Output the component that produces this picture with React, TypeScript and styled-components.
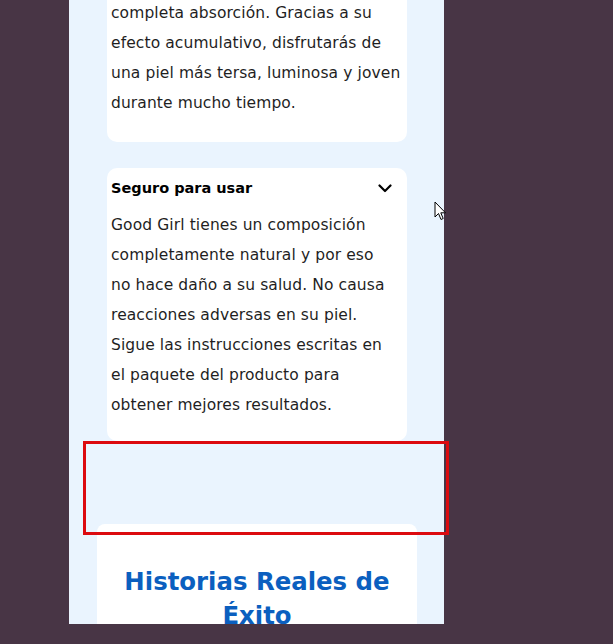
import React from "react";
import styled, { createGlobalStyle } from "styled-components";

const Global = createGlobalStyle`
  html, body { margin: 0; padding: 0; background: #483545; }
  body { font-family: "DejaVu Sans", "Noto Sans", sans-serif; }
  #root { min-height: 644px; }
`;

const Stage = styled.div`
  position: relative;
  width: 613px;
  height: 644px;
  background: #483545;
  overflow: hidden;
`;

const Panel = styled.main`
  margin-left: 69px;
  width: 375px;
  height: 624px;
  background: #eaf4fe;
  overflow: hidden;
  display: flex;
  flex-direction: column;
`;

const Card = styled.section<{ $first?: boolean }>`
  margin: ${(p) => (p.$first ? "0" : "26px")} 37px 0 38px;
  background: #ffffff;
  border-radius: ${(p) => (p.$first ? "0 0 10px 10px" : "10px")};
  padding: ${(p) => (p.$first ? "0 4px 24px" : "8px 12px 21px 4px")};
`;

const Header = styled.div`
  display: flex;
  align-items: center;
  justify-content: space-between;
  height: 24px;
  margin-right: -8px;
  padding-right: 11px;
  margin-bottom: 10px;
`;

const Title = styled.h3`
  margin: 0;
  font-family: "DejaVu Sans", sans-serif;
  font-weight: 700;
  font-size: 14.5px;
  color: #000;
`;

const Body = styled.p<{ $lift?: boolean }>`
  margin: ${(p) => (p.$lift ? "-2px 0 0" : "0")};
  font-size: 15.5px;
  line-height: 30px;
  color: #1f1f1f;
  letter-spacing: 0.1px;
`;

const StoryCard = styled.section`
  margin: 83px 27px 0 28px;
  background: #ffffff;
  border-radius: 8px 8px 0 0;
  flex: 1;
  padding-top: 41px;
`;

const StoryTitle = styled.h2`
  margin: 0;
  text-align: center;
  font-family: "DejaVu Sans", sans-serif;
  font-weight: 700;
  font-size: 24.4px;
  line-height: 34px;
  color: #0b5fbf;
  padding: 0 20px;
`;

const Highlight = styled.div`
  position: absolute;
  left: 83px;
  top: 441px;
  width: 360px;
  height: 88px;
  border: 3px solid #dc0a0f;
  pointer-events: none;
`;

const Cursor = styled.svg`
  position: absolute;
  left: 434px;
  top: 201px;
`;

const Chevron = () => (
  <svg width="14" height="10" viewBox="0 0 14 10" aria-hidden>
    <path d="M1.5 2.5 L7 8 L12.5 2.5" fill="none" stroke="#000" strokeWidth="2.2" strokeLinecap="round" strokeLinejoin="round" />
  </svg>
);

export default function App() {
  return (
    <Stage>
      <Global />
      <Panel>
        <Card $first>
          <Body $lift>
            completa absorción. Gracias a su efecto acumulativo, disfrutarás de una piel más tersa, luminosa y joven durante mucho tiempo.
          </Body>
        </Card>
        <Card>
          <Header>
            <Title>Seguro para usar</Title>
            <Chevron />
          </Header>
          <Body>
            Good Girl tienes un composición completamente natural y por eso no hace daño a su salud. No causa reacciones adversas en su piel. Sigue las instrucciones escritas en el paquete del producto para obtener mejores resultados.
          </Body>
        </Card>
        <StoryCard>
          <StoryTitle>Historias Reales de Éxito</StoryTitle>
        </StoryCard>
      </Panel>
      <Highlight />
      <Cursor width="13" height="20" viewBox="0 0 13 20" aria-hidden>
        <path d="M1 1 L1 16 L4.5 12.5 L7 18.5 L9.2 17.5 L6.8 11.8 L11.5 11.8 Z" fill="#fff" stroke="#000" strokeWidth="1" strokeLinejoin="round" />
      </Cursor>
    </Stage>
  );
}
